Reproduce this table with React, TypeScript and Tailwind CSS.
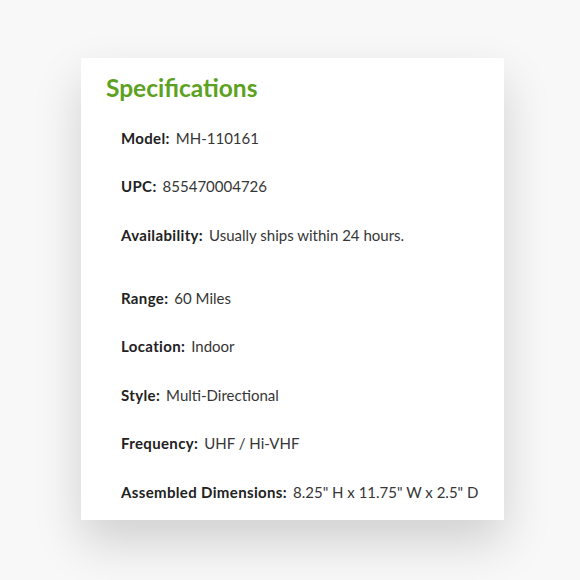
import React from "react";

const rows: [string, string][] = [
  ["Model:", "MH-110161"],
  ["UPC:", "855470004726"],
  ["Availability:", "Usually ships within 24 hours."],
  ["Range:", "60 Miles"],
  ["Location:", "Indoor"],
  ["Style:", "Multi-Directional"],
  ["Frequency:", "UHF / Hi-VHF"],
  ["Assembled Dimensions:", "8.25\" H x 11.75\" W x 2.5\" D"],
];

export default function App() {
  return (
    <div
      className="w-[580px] h-[580px] bg-[#f8f8f8] pt-[58px] pl-[81px]"
      style={{ fontFamily: "Lato, 'Open Sans', sans-serif" }}
    >
      <div className="w-[423px] h-[462px] bg-white shadow-[0_22px_45px_rgba(0,0,0,0.16)] pt-[15px] pl-[25px]">
        <h2 className="text-[24.5px] leading-[1.2] font-bold text-[#5ca11f]">Specifications</h2>
        <div className="mt-[11px] pl-[15px] flex flex-col">
          {rows.map(([k, v], i) => (
            <div
              key={k}
              className={
                "h-[48.5px] flex items-center gap-[6px] text-[15px] leading-[1.2] " +
                (i === 2 ? "mb-[14.5px]" : "")
              }
            >
              <span className="font-bold text-[#222222] tracking-[0.35px]">{k}</span>
              <span className="text-[#363636]">{v}</span>
            </div>
          ))}
        </div>
      </div>
    </div>
  );
}
